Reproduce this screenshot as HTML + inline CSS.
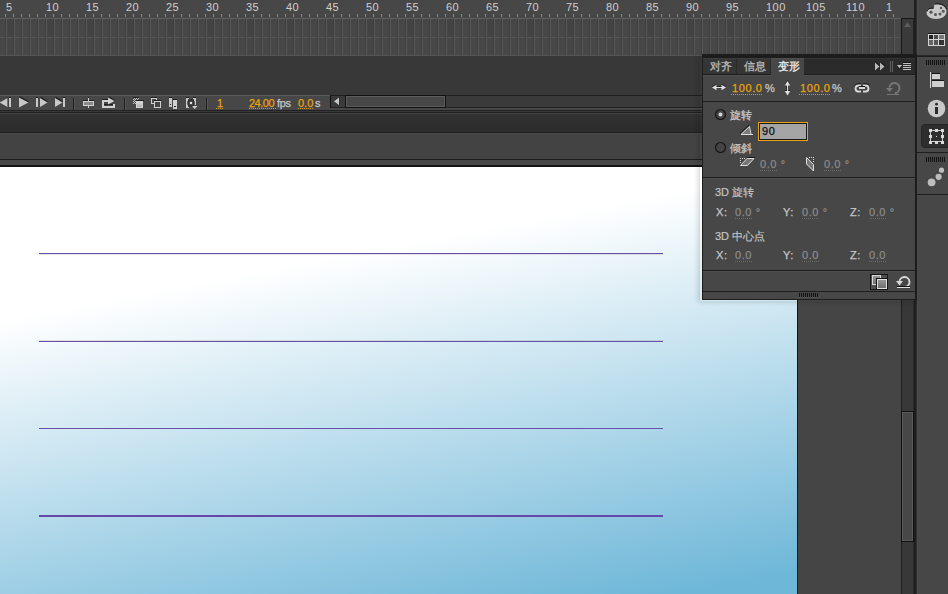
<!DOCTYPE html>
<html><head><meta charset="utf-8">
<style>
*{margin:0;padding:0;box-sizing:border-box}
html,body{width:948px;height:594px;overflow:hidden;background:#383838}
body{position:relative;font-family:"Liberation Sans",sans-serif;font-size:11px;color:#c8c8c8}
.a{position:absolute}
.tab{top:58px;height:16px;background:#353535;border-top:1px solid #3e3e3e}
.cj{font-size:11px;line-height:11px;white-space:nowrap;-webkit-text-stroke-width:.3px}
.b{-webkit-text-stroke-width:.15px}
.num{font-size:11px;line-height:11px;white-space:nowrap;letter-spacing:.6px;-webkit-text-stroke-width:.25px}
.dots{height:1px;background:linear-gradient(90deg,#d89a10 0 1px,transparent 1px 2px);background-size:2px 1px}
.dots.g{background:linear-gradient(90deg,#6a6a6a 0 1px,transparent 1px 2px);background-size:2px 1px}
.hl{left:703px;width:212px;height:1px;background:#1e1e1e}
.lbl{top:2px;margin-left:-1px;letter-spacing:.5px;line-height:11px;font-size:11px;color:#d0d0d0;white-space:nowrap}
</style></head><body>

<!-- ruler -->
<div class="a" style="left:0;top:0;width:914px;height:18px;background:#474747"></div>
<div class="a lbl" style="left:7px">5</div><div class="a lbl" style="left:47px">10</div><div class="a lbl" style="left:87px">15</div><div class="a lbl" style="left:127px">20</div><div class="a lbl" style="left:167px">25</div><div class="a lbl" style="left:207px">30</div><div class="a lbl" style="left:247px">35</div><div class="a lbl" style="left:287px">40</div><div class="a lbl" style="left:327px">45</div><div class="a lbl" style="left:367px">50</div><div class="a lbl" style="left:407px">55</div><div class="a lbl" style="left:447px">60</div><div class="a lbl" style="left:487px">65</div><div class="a lbl" style="left:527px">70</div><div class="a lbl" style="left:567px">75</div><div class="a lbl" style="left:607px">80</div><div class="a lbl" style="left:647px">85</div><div class="a lbl" style="left:687px">90</div><div class="a lbl" style="left:727px">95</div><div class="a lbl" style="left:767px">100</div><div class="a lbl" style="left:807px">105</div><div class="a lbl" style="left:847px">110</div><div class="a lbl" style="left:887px">1</div>
<div class="a" id="ticks" style="left:0;top:14px;width:901px;height:3px;background:linear-gradient(90deg,#8a8a8a 0 1px,transparent 1px 8px);background-size:8px 3px;background-position:5px 0"></div>
<!-- grid -->
<div class="a" style="left:0;top:18px;width:901px;height:38px;background:#474747"></div>
<div class="a" style="left:0;top:18px;width:901px;height:1px;background:#606060"></div>
<div class="a" style="left:0;top:37px;width:901px;height:1px;background:#555"></div>
<div class="a" style="left:0;top:55px;width:901px;height:1px;background:#555"></div>
<div class="a" style="left:0;top:19px;width:901px;height:36px;background:linear-gradient(90deg,#3e3e3e 0 1px,#585858 1px 2px,transparent 2px 8px);background-size:8px 36px;background-position:5px 0"></div>


<div class="a" style="left:0;top:19px;width:901px;height:18px;background:linear-gradient(90deg,transparent 0 7px,#434343 7px 13px,transparent 13px 40px);background-size:40px 18px"></div>
<div class="a" style="left:0;top:38px;width:901px;height:17px;background:linear-gradient(90deg,transparent 0 7px,#464646 7px 13px,transparent 13px 40px);background-size:40px 17px"></div>
<!-- timeline vscroll -->
<div class="a" style="left:901px;top:18px;width:13px;height:38px;background:#3a3a3a;border:1px solid #161616;border-bottom:none;border-right-color:#222"></div>

<!-- middle dark area -->
<div class="a" style="left:0;top:56px;width:914px;height:39px;background:#383838"></div>

<!-- toolbar -->
<div class="a" style="left:0;top:95px;width:330px;height:15px;background:#474747;border-top:1px solid #5a5a5a"></div>
<div class="a" style="left:330px;top:95px;width:584px;height:13px;background:#3a3a3a;border-top:1px solid #1e1e1e;border-bottom:1px solid #222"></div>
<div class="a" style="left:330px;top:108px;width:584px;height:2px;background:#474747"></div>
<div class="a" style="left:0;top:110px;width:914px;height:1px;background:#222"></div>
<div class="a" style="left:0;top:111px;width:914px;height:1px;background:#383838"></div>
<div class="a" style="left:0;top:112px;width:914px;height:1px;background:#202020"></div>
<div class="a" style="left:0;top:113px;width:914px;height:1px;background:#424242"></div>
<div class="a" style="left:0;top:114px;width:914px;height:18px;background:linear-gradient(#323232,#2b2b2b)"></div>
<div class="a" style="left:0;top:132px;width:914px;height:1px;background:#1f1f1f"></div>
<div class="a" style="left:0;top:133px;width:914px;height:26px;background:#434343;border-top:1px solid #494949"></div>
<div class="a" style="left:0;top:159px;width:914px;height:1px;background:#1c1c1c"></div>
<div class="a" style="left:0;top:160px;width:914px;height:5px;background:#474747"></div>
<div class="a" style="left:0;top:165px;width:914px;height:2px;background:#141414"></div>

<!-- stage -->
<div class="a" style="left:0;top:167px;width:797px;height:427px;background:linear-gradient(169.27deg,#fff 151px,#6eb7d8 547px)"></div>
<div class="a" style="left:797px;top:167px;width:1px;height:427px;background:#141414"></div>
<div class="a" style="left:798px;top:167px;width:103px;height:427px;background:#454545"></div>

<!-- lines -->
<div class="a" style="left:39px;top:253px;width:624px;height:1px;background:#6650aa"></div>
<div class="a" style="left:39px;top:341px;width:624px;height:1px;background:#6650aa"></div>
<div class="a" style="left:39px;top:428px;width:624px;height:1px;background:#6650aa"></div>
<div class="a" style="left:39px;top:515px;width:624px;height:2px;background:#6548a8"></div>

<div class="a" style="left:39px;top:254px;width:624px;height:1px;background:rgba(90,80,60,.14)"></div>
<div class="a" style="left:39px;top:340px;width:624px;height:1px;background:rgba(90,80,60,.14)"></div>
<!-- stage vscroll -->
<div class="a" style="left:901px;top:167px;width:13px;height:427px;background:#383838;border-left:1px solid #1e1e1e;border-right:1px solid #2b2b2b"></div>
<div class="a" style="left:901px;top:411px;width:13px;height:131px;background:#474747;border:1px solid #111;box-shadow:inset 0 0 0 1px #5a5a5a"></div>

<!-- dock separator -->
<div class="a" style="left:914px;top:0;width:2px;height:594px;background:#1e1e1e"></div>
<div class="a" style="left:916px;top:0;width:1px;height:594px;background:#2f2f2f"></div>
<div class="a" style="left:917px;top:0;width:1px;height:594px;background:#4b4b4b"></div>
<!-- dock -->
<div class="a" style="left:918px;top:0;width:30px;height:594px;background:#474747"></div>



<div class="a num" style="left:217px;top:98px;color:#e9a30e">1</div>
<div class="a dots" style="left:216px;top:108px;width:8px"></div>
<div class="a num" style="left:249px;top:98px;color:#e9a30e;letter-spacing:-.5px">24.00</div>
<div class="a dots" style="left:249px;top:108px;width:28px"></div>
<div class="a num" style="left:277px;top:98px;color:#c8c8c8;letter-spacing:-.3px">fps</div>
<div class="a num" style="left:298px;top:98px;color:#e9a30e;letter-spacing:0">0.0</div>
<div class="a dots" style="left:298px;top:108px;width:16px"></div>
<div class="a num" style="left:315px;top:98px;color:#c8c8c8">s</div>
<!-- dock separators -->
<div class="a" style="left:917px;top:55px;width:31px;height:1px;background:#2a2a2a"></div>
<div class="a" style="left:917px;top:56px;width:31px;height:1px;background:#1e1e1e"></div>
<div class="a" style="left:917px;top:152px;width:31px;height:1px;background:#1e1e1e"></div>
<div class="a" style="left:917px;top:194px;width:31px;height:1px;background:#1e1e1e"></div>
<!-- panel -->
<div class="a" style="left:700px;top:56px;width:215px;height:245px;box-shadow:-2px 1px 5px rgba(0,0,0,.16)"></div>
<div class="a" style="left:702px;top:54px;width:215px;height:246px;background:#474747;border:1px solid #1c1c1c;border-top:4px solid #1c1c1c;border-right:2px solid #1c1c1c"></div>
<div class="a" style="left:703px;top:58px;width:212px;height:17px;background:#2b2b2b;border-top:1px solid #363636"></div>
<div class="a tab" style="left:703px;width:33px"></div>
<div class="a tab" style="left:737px;width:33px"></div>
<div class="a" style="left:771px;top:58px;width:33px;height:18px;background:#474747;border-top:1px solid #505050"></div>
<div class="a" style="left:703px;top:74px;width:68px;height:1px;background:#1e1e1e"></div>
<div class="a" style="left:804px;top:74px;width:111px;height:1px;background:#1e1e1e"></div>
<div class="a" style="left:703px;top:75px;width:68px;height:1px;background:#4e4e4e"></div>
<div class="a" style="left:804px;top:75px;width:111px;height:1px;background:#4e4e4e"></div>
<div class="a cj" style="left:710px;top:61px;color:#bcbcbc">对齐</div>
<div class="a cj" style="left:744px;top:61px;color:#bcbcbc">信息</div>
<div class="a cj" style="left:778px;top:61px;color:#ececec">变形</div>

<div class="a num" style="left:732px;top:83px;color:#e9a30e">100.0</div>
<div class="a dots" style="left:731px;top:94px;width:32px"></div>
<div class="a num" style="left:765px;top:83px;color:#c8c8c8">%</div>
<div class="a num" style="left:800px;top:83px;color:#e9a30e">100.0</div>
<div class="a dots" style="left:799px;top:94px;width:32px"></div>
<div class="a num" style="left:832px;top:83px;color:#c8c8c8">%</div>

<div class="a hl" style="top:101px"></div>

<div class="a cj" style="left:730px;top:110px;color:#c8c8c8">旋转</div>
<div class="a" style="left:758px;top:122px;width:50px;height:19px;border:1px solid #e9a30e;background:#a5a5a5;box-shadow:inset 0 0 0 1px #1a1a1a"></div>
<div class="a num" style="left:762px;top:126px;color:#111">90</div>
<div class="a cj" style="left:730px;top:143px;color:#c8c8c8">倾斜</div>
<div class="a num" style="left:760px;top:159px;color:#8a8a8a">0.0 °</div>
<div class="a dots g" style="left:760px;top:170px;width:18px"></div>
<div class="a num" style="left:824px;top:159px;color:#8a8a8a">0.0 °</div>
<div class="a dots g" style="left:824px;top:170px;width:18px"></div>

<div class="a hl" style="top:177px"></div>
<div class="a" style="left:703px;top:178px;width:212px;height:1px;background:#4e4e4e"></div>

<div class="a cj b" style="left:715px;top:187px;color:#c8c8c8">3D 旋转</div>
<div class="a num" style="left:716px;top:207px;color:#c8c8c8">X:</div>
<div class="a num" style="left:735px;top:207px;color:#8a8a8a">0.0 °</div>
<div class="a dots g" style="left:735px;top:218px;width:18px"></div>
<div class="a num" style="left:783px;top:207px;color:#c8c8c8">Y:</div>
<div class="a num" style="left:802px;top:207px;color:#8a8a8a">0.0 °</div>
<div class="a dots g" style="left:802px;top:218px;width:18px"></div>
<div class="a num" style="left:850px;top:207px;color:#c8c8c8">Z:</div>
<div class="a num" style="left:869px;top:207px;color:#8a8a8a">0.0 °</div>
<div class="a dots g" style="left:869px;top:218px;width:18px"></div>

<div class="a cj b" style="left:715px;top:231px;color:#c8c8c8">3D 中心点</div>
<div class="a num" style="left:716px;top:250px;color:#c8c8c8">X:</div>
<div class="a num" style="left:735px;top:250px;color:#8a8a8a">0.0</div>
<div class="a dots g" style="left:735px;top:261px;width:18px"></div>
<div class="a num" style="left:783px;top:250px;color:#c8c8c8">Y:</div>
<div class="a num" style="left:802px;top:250px;color:#8a8a8a">0.0</div>
<div class="a dots g" style="left:802px;top:261px;width:18px"></div>
<div class="a num" style="left:850px;top:250px;color:#c8c8c8">Z:</div>
<div class="a num" style="left:869px;top:250px;color:#8a8a8a">0.0</div>
<div class="a dots g" style="left:869px;top:261px;width:18px"></div>

<div class="a hl" style="top:270px"></div>
<div class="a" style="left:703px;top:271px;width:212px;height:1px;background:#4e4e4e"></div>
<div class="a hl" style="top:291px"></div>
<div class="a" style="left:799px;top:293px;width:20px;height:4px;background:linear-gradient(90deg,#111 0 1px,transparent 1px 2px);background-size:2px 4px"></div>
<div class="a" style="left:799px;top:297px;width:20px;height:1px;background:linear-gradient(90deg,#5a5a5a 0 1px,transparent 1px 2px);background-size:2px 1px"></div>


<svg class="a" style="left:0;top:0" width="948" height="594" viewBox="0 0 948 594">
<defs>
<linearGradient id="gf" x1="0" y1="0" x2="0" y2="1"><stop offset="0" stop-color="#9a9a9a"/><stop offset="1" stop-color="#6a6a6a"/></linearGradient>
<linearGradient id="gl" x1="0" y1="0" x2="0" y2="1"><stop offset="0" stop-color="#d8d8d8"/><stop offset="1" stop-color="#b0b0b0"/></linearGradient>
</defs>
<!-- ===== timeline toolbar ===== -->
<g fill="#c8c8c8">
 <!-- step back -->
 <polygon points="0,102.5 7.5,98 7.5,107" fill="#1c1c1c" transform="translate(0.6,-0.8)"/>
 <polygon points="-0.5,102.5 7.5,98 7.5,107"/>
 <rect x="9" y="98" width="2" height="9" fill="#1c1c1c" transform="translate(0,-1)"/>
 <rect x="9" y="98" width="2" height="9"/>
 <!-- play -->
 <polygon points="19,97 28.5,102.5 19,108" fill="#1c1c1c" transform="translate(0.5,-1)"/>
 <polygon points="19,97.5 28.5,102.5 19,107.5"/>
 <!-- step fwd -->
 <rect x="36" y="97" width="2" height="9" fill="#1c1c1c"/>
 <rect x="36" y="98" width="2" height="9"/>
 <polygon points="40,97.5 47.5,102.5 40,107" fill="#1c1c1c" transform="translate(0.5,-1)"/>
 <polygon points="40,98 47.5,102.5 40,107"/>
 <!-- to end -->
 <polygon points="55,97.5 62.5,102.5 55,107" fill="#1c1c1c" transform="translate(0.5,-1)"/>
 <polygon points="55,98 62.5,102.5 55,107"/>
 <rect x="63" y="97" width="2" height="9" fill="#1c1c1c"/>
 <rect x="63" y="98" width="2" height="9"/>
</g>
<g shape-rendering="crispEdges">
 <rect x="73" y="98" width="1" height="12" fill="#1e1e1e"/><rect x="74" y="98" width="1" height="12" fill="#555"/>
 <rect x="124" y="98" width="1" height="12" fill="#1e1e1e"/><rect x="125" y="98" width="1" height="12" fill="#555"/>
 <rect x="206" y="98" width="1" height="12" fill="#1e1e1e"/><rect x="207" y="98" width="1" height="12" fill="#555"/>
 <!-- center frame -->
 <rect x="83" y="100" width="11" height="1" fill="#1e1e1e"/>
 <rect x="83" y="101" width="11" height="5" fill="#d0d0d0"/>
 <rect x="84" y="102" width="9" height="3" fill="#8a8a8a"/>
 <rect x="88" y="98" width="1" height="3" fill="#d0d0d0"/>
 <rect x="88" y="105" width="1" height="3" fill="#d0d0d0"/>
 <rect x="88" y="97" width="1" height="1" fill="#1e1e1e"/>
 <!-- loop -->
 <rect x="102" y="99" width="7" height="1" fill="#1e1e1e"/>
 <rect x="102" y="100" width="2" height="8" fill="#d0d0d0"/>
 <rect x="102" y="100" width="7" height="2" fill="#d0d0d0"/>
 <rect x="102" y="106" width="13" height="2" fill="#d0d0d0"/>
 <rect x="113" y="104" width="2" height="3" fill="#d0d0d0"/>
 <rect x="104" y="104" width="9" height="1" fill="#1e1e1e"/>
 <polygon points="108,97 115,101 108,105" fill="#1e1e1e" transform="translate(0.5,-0.8)" shape-rendering="auto"/>
 <polygon points="108,97.5 114.5,101 108,104.5" fill="#d4d4d4" shape-rendering="auto"/>
 <!-- onion skin -->
 <rect x="133" y="97" width="6" height="1" fill="#1e1e1e"/>
 <rect x="134" y="98" width="1" height="1" fill="#c8c8c8"/><rect x="136" y="98" width="1" height="1" fill="#c8c8c8"/><rect x="138" y="98" width="1" height="1" fill="#c8c8c8"/><rect x="133" y="99" width="1" height="1" fill="#c8c8c8"/><rect x="135" y="99" width="1" height="1" fill="#c8c8c8"/><rect x="137" y="99" width="1" height="1" fill="#c8c8c8"/><rect x="134" y="100" width="1" height="1" fill="#c8c8c8"/><rect x="136" y="100" width="1" height="1" fill="#c8c8c8"/><rect x="138" y="100" width="1" height="1" fill="#c8c8c8"/><rect x="133" y="101" width="1" height="1" fill="#c8c8c8"/><rect x="135" y="101" width="1" height="1" fill="#c8c8c8"/><rect x="134" y="102" width="1" height="1" fill="#c8c8c8"/><rect x="133" y="103" width="1" height="1" fill="#c8c8c8"/><rect x="135" y="103" width="1" height="1" fill="#c8c8c8"/>
 <rect x="136" y="100" width="8" height="1" fill="#1e1e1e"/>
 <rect x="136" y="101" width="7" height="7" fill="#d4d4d4"/>
 <rect x="137" y="102" width="5" height="5" fill="url(#gl)"/>
 <!-- onion outline -->
 <rect x="151" y="97" width="6" height="1" fill="#1e1e1e"/>
 <rect x="151.5" y="98.5" width="5" height="5" fill="none" stroke="#d0d0d0" stroke-width="1"/>
 <rect x="154" y="100" width="7" height="1" fill="#1e1e1e"/>
 <rect x="154" y="101" width="7" height="7" fill="#444"/>
 <rect x="154.5" y="101.5" width="6" height="6" fill="none" stroke="#d0d0d0" stroke-width="1"/>
 <!-- edit multiple -->
 <rect x="169" y="97" width="3" height="1" fill="#1e1e1e"/>
 <rect x="169" y="98" width="3" height="9" fill="#c8c8c8"/>
 <rect x="170" y="104" width="1" height="1" fill="#222"/>
 <rect x="173" y="99" width="4" height="1" fill="#1e1e1e"/>
 <rect x="173" y="100" width="4" height="9" fill="#d0d0d0"/>
 <rect x="174" y="106" width="2" height="1" fill="#222"/>
 <!-- modify markers -->
 <rect x="186" y="97" width="3" height="1" fill="#1e1e1e"/><rect x="193" y="97" width="3" height="1" fill="#1e1e1e"/>
 <rect x="186" y="98" width="2" height="10" fill="#c8c8c8"/><rect x="186" y="98" width="3" height="1" fill="#c8c8c8"/><rect x="186" y="107" width="3" height="1" fill="#c8c8c8"/>
 <rect x="194" y="98" width="2" height="7" fill="#c8c8c8"/><rect x="193" y="98" width="3" height="1" fill="#c8c8c8"/>
 <circle cx="191" cy="103" r="3.2" fill="none" stroke="#2a2a2a" stroke-width="1.2" shape-rendering="auto"/>
 <rect x="190" y="102" width="2" height="2" fill="#e0e0e0"/>
</g>
<polygon points="192,106 197.5,106 194.75,109" fill="#d0d0d0"/>
<!-- fps text dotted underline -->
<!-- scrollbar arrow -->
<rect x="330" y="95" width="1" height="13" fill="#111"/><polygon points="334,101.2 339,97.5 339,105" fill="#1a1a1a" transform="translate(0.3,-0.7)"/><polygon points="334,101.2 339,97.5 339,105" fill="#c8c8c8"/>
<rect x="345.5" y="95.5" width="100" height="12" fill="#474747" stroke="#111" stroke-width="1"/>
<rect x="346.5" y="96.5" width="98" height="10" fill="none" stroke="#5c5c5c" stroke-width="1"/>
<!-- timeline vscroll up arrow -->
<polygon points="904,27 911,27 907.5,22" fill="#5a5a5a"/>

<!-- ===== panel icons ===== -->
<g>
 <!-- double arrow h -->
 <g fill="#141414" opacity=".8" transform="translate(0,-1)">
  <rect x="716" y="87" width="6" height="1"/>
  <polygon points="712,87.5 716.5,84.8 716.5,90.2"/><polygon points="726,87.5 721.5,84.8 721.5,90.2"/>
 </g>
 <g fill="#e2e2e2">
  <rect x="716" y="87" width="6" height="1"/>
  <polygon points="712,87.5 716.5,84.8 716.5,90.2"/><polygon points="726,87.5 721.5,84.8 721.5,90.2"/>
 </g>
 <!-- double arrow v -->
 <g fill="#141414" opacity=".8" transform="translate(0,-1)">
  <polygon points="787.5,81 784.8,85.5 790.2,85.5"/><polygon points="787.5,95.5 784.8,91 790.2,91"/>
 </g>
 <g fill="#e2e2e2">
  <rect x="787" y="85" width="1" height="6"/>
  <polygon points="787.5,81 784.8,85.5 790.2,85.5"/><polygon points="787.5,95.5 784.8,91 790.2,91"/>
 </g>
 <rect x="786" y="86" width="1" height="5" fill="#1a1a1a" opacity=".6"/>
 <!-- link -->
 <path d="M861,85 H858.5 A3.5,3.5 0 0 0 858.5,92 H861 M863,85 H865.5 A3.5,3.5 0 0 1 865.5,92 H863" fill="none" stroke="#141414" stroke-width="2" transform="translate(0,-1)" opacity=".7"/>
 <path d="M861,85.5 H858.5 A3,3 0 0 0 858.5,91.5 H861 M863,85.5 H865.5 A3,3 0 0 1 865.5,91.5 H863" fill="none" stroke="#d8d8d8" stroke-width="2"/>
 <rect x="859" y="87" width="6" height="2" fill="#d8d8d8"/>
 <rect x="859" y="86" width="6" height="1" fill="#141414"/>
 <!-- reset disabled -->
 <path d="M889.5,87.5 A5,5 0 1 1 895,93" fill="none" stroke="#777" stroke-width="2"/>
 <polygon points="886,88 893,88 889.5,92" fill="#777"/>
 <rect x="887" y="94" width="12" height="1" fill="#777"/>
 <!-- tab bar icons -->
 <g fill="#141414" transform="translate(0.7,-0.7)"><polygon points="875,62.5 879.5,66.5 875,70.5"/><polygon points="880,62.5 884.5,66.5 880,70.5"/></g>
 <g fill="#b8b8b8"><polygon points="875,62.5 879.5,66.5 875,70.5"/><polygon points="880,62.5 884.5,66.5 880,70.5"/></g>
 <rect x="890" y="61" width="1" height="11" fill="#606060"/><rect x="892" y="61" width="1" height="11" fill="#606060"/>
 <polygon points="897,65 902,65 899.5,68" fill="#c0c0c0"/>
 <g fill="#c0c0c0" shape-rendering="crispEdges"><rect x="903" y="63" width="8" height="1"/><rect x="903" y="65" width="8" height="1"/><rect x="903" y="67" width="8" height="1"/><rect x="903" y="69" width="8" height="1"/></g>
 <rect x="903" y="62" width="8" height="1" fill="#111"/>
 <!-- radio 1 -->
 <circle cx="720.5" cy="114.5" r="5" fill="#444" stroke="#161616" stroke-width="1.2"/>
 <circle cx="720.5" cy="114.5" r="1.9" fill="#d8d8d8"/>
 <!-- radio 2 -->
 <circle cx="720.5" cy="147.5" r="5" fill="#444" stroke="#161616" stroke-width="1.2"/>
 <!-- angle icon -->
 <polygon points="741,134 749.5,126 751,134" fill="#7a7a7a"/>
 <path d="M741,134.5 L749.5,126.5 L751,134" fill="none" stroke="#d8d8d8" stroke-width="1"/>
 <path d="M740,133.5 L749,125" fill="none" stroke="#141414" stroke-width="1"/>
 <rect x="741" y="134" width="12" height="1" fill="#dcdcdc"/>
 <!-- skew h -->
 <polygon points="740.5,166 747.5,166 754,158.5 747,158.5" fill="#777"/>
 <path d="M740.5,165.5 H747.5 L754,158.5 H747 Z" fill="none" stroke="#dcdcdc" stroke-width="1"/>
 <rect x="747" y="157" width="8" height="1" fill="#141414"/>
 <g fill="#e0e0e0"><rect x="740" y="158" width="1" height="1"/><rect x="742" y="158" width="1" height="1"/><rect x="744" y="158" width="1" height="1"/><rect x="740" y="160" width="1" height="1"/><rect x="740" y="162" width="1" height="1"/></g>
 <!-- skew v -->
 <polygon points="806,157.5 813.5,164.5 813.5,171 806,164" fill="#777"/>
 <path d="M806.5,157.5 L813.5,164.5 V171 L806.5,164 Z" fill="none" stroke="#dcdcdc" stroke-width="1"/>
 <g fill="#e0e0e0"><rect x="809" y="157" width="1" height="1"/><rect x="811" y="157" width="1" height="1"/><rect x="813" y="157" width="1" height="1"/><rect x="813" y="159" width="1" height="1"/><rect x="813" y="161" width="1" height="1"/></g>
 <!-- dup icon -->
 <rect x="870" y="274" width="18" height="16" fill="#141414"/>
 <rect x="871" y="275" width="16" height="14" fill="#505050"/>
 <rect x="872" y="275" width="9" height="10" fill="url(#gf)"/>
 <rect x="872.5" y="275.5" width="8" height="9" fill="none" stroke="#d8d8d8"/>
 <rect x="876" y="278" width="11" height="11" fill="#141414"/>
 <rect x="877" y="279" width="10" height="10" fill="url(#gf)"/>
 <rect x="877.5" y="279.5" width="9" height="9" fill="none" stroke="#e0e0e0"/>
 <!-- reset enabled -->
 <path d="M899.5,282.5 A5,5 0 1 1 905,288" fill="none" stroke="#141414" stroke-width="2" transform="translate(0,-1)" opacity=".7"/>
 <path d="M899.5,282.5 A5,5 0 1 1 905,287" fill="none" stroke="#d8d8d8" stroke-width="2"/>
 <polygon points="896,281 903,281 899.5,285.5" fill="#d8d8d8"/>
 <rect x="897" y="286" width="13" height="1" fill="#141414"/>
 <rect x="897" y="287" width="13" height="1" fill="#e0e0e0"/>
</g>

<!-- ===== dock icons ===== -->
<g>
 <!-- palette -->
 <path d="M935,4.5 C941,3.5 946.5,6.5 946.5,11.5 C946.5,16 942,19 936,19 C930,19 926.5,16 926.5,12.5 C926.5,9.5 929,8 933.5,8.5 C934.5,8 933.5,5 935,4.5 Z" fill="#c8c8c8"/>
 <path d="M926.8,11.5 C927.5,9 930,8 933.5,8.2" fill="none" stroke="#141414" stroke-width="1"/>
 <path d="M935,4 C940,3 945,5 946.5,9" fill="none" stroke="#141414" stroke-width="1"/>
 <g fill="#555"><circle cx="931" cy="12.2" r="1.6"/><circle cx="935.5" cy="14.5" r="1.5"/><circle cx="940" cy="14" r="1.5"/><circle cx="943.2" cy="11.2" r="1.5"/><circle cx="941" cy="8" r="1.2"/></g>
 <!-- swatches -->
 <rect x="928" y="33" width="17" height="1" fill="#141414"/>
 <rect x="928" y="34" width="17" height="12" fill="#d4d4d4"/>
 <rect x="929" y="35" width="4" height="4" fill="#222"/><rect x="934" y="35" width="4" height="4" fill="#4a4a4a"/><rect x="939" y="35" width="5" height="4" fill="#777"/>
 <rect x="929" y="40" width="4" height="5" fill="#666"/><rect x="934" y="40" width="4" height="5" fill="#555"/><rect x="939" y="40" width="5" height="5" fill="#333"/>
 <!-- grip 1 -->
 <rect x="926" y="60" width="20" height="5" fill="url(#grip)"/>
 <!-- align -->
 <rect x="930" y="72" width="1" height="16" fill="#d8d8d8"/>
 <rect x="932" y="73" width="8" height="1" fill="#141414"/>
 <rect x="932" y="74" width="8" height="5" fill="#cfcfcf"/>
 <rect x="932" y="80" width="12" height="1" fill="#141414"/>
 <rect x="932" y="81" width="12" height="6" fill="#cfcfcf"/>
 <!-- info -->
 <circle cx="936.5" cy="108.5" r="8.8" fill="#c8c8c8"/>
 <circle cx="936.5" cy="104.2" r="1.4" fill="#2a2a2a"/>
 <rect x="935" y="107" width="3" height="7" fill="#2a2a2a"/>
 <!-- transform selected button -->
 <rect x="921.5" y="124.5" width="30" height="23" rx="3" fill="#2e2e2e" stroke="#262626"/>
 <rect x="930.5" y="130.5" width="12" height="11" fill="none" stroke="#d0d0d0"/>
 <g fill="#d8d8d8"><rect x="929" y="129" width="3" height="3"/><rect x="935" y="129" width="3" height="3"/><rect x="941" y="129" width="3" height="3"/><rect x="929" y="135" width="3" height="3"/><rect x="941" y="135" width="3" height="3"/><rect x="929" y="141" width="3" height="3"/><rect x="935" y="141" width="3" height="3"/><rect x="941" y="141" width="3" height="3"/></g>

 <rect x="936" y="136" width="1" height="1" fill="#d8d8d8"/>
 <!-- grip 2 -->
 <rect x="926" y="157" width="20" height="5" fill="url(#grip)"/>
 <!-- motion -->
 <circle cx="941.5" cy="170.2" r="2.6" fill="#bdbdbd"/>
 <circle cx="938.6" cy="176.8" r="3.1" fill="#bdbdbd"/>
 <circle cx="931.6" cy="182.3" r="3.9" fill="#bdbdbd"/>
</g>
<defs><pattern id="grip" x="0" y="0" width="2" height="5" patternUnits="userSpaceOnUse"><rect x="0" y="0" width="1" height="5" fill="#111"/></pattern></defs>
</svg>

</body></html>
